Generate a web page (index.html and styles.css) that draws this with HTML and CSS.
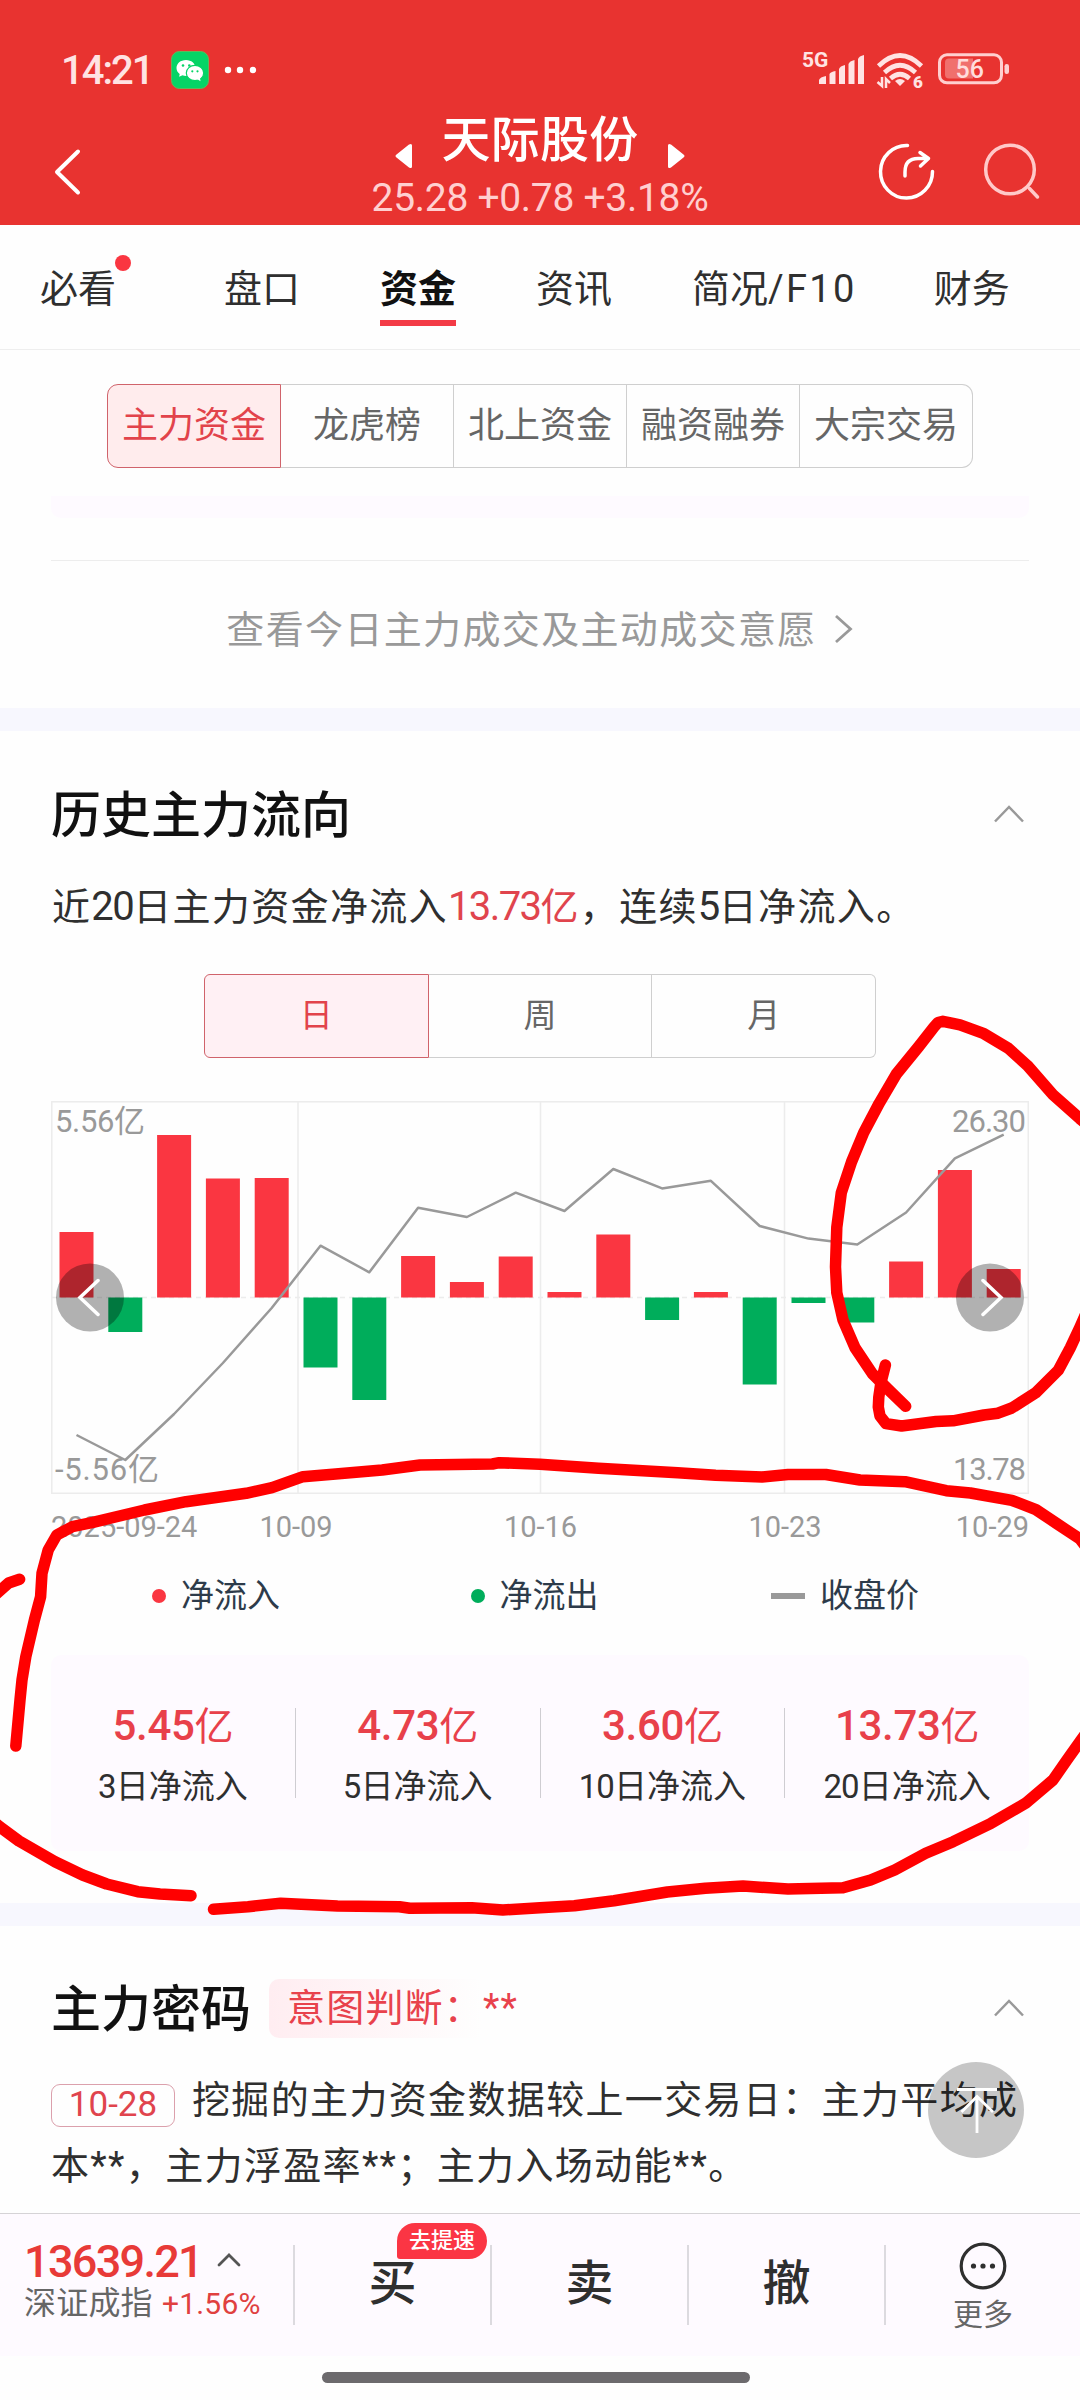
FILE: index.html
```html
<!DOCTYPE html>
<html lang="zh-CN">
<head>
  <meta charset="UTF-8" />
  <title>天际股份 - 资金</title>
  <link rel="stylesheet" href="styles.css">
</head>
<body>
  <div class="phone">
    <header class="header">
      <div class="status-bar">
        <span class="time">14:21</span>
        <svg class="wechat" width="38" height="38" viewBox="0 0 38 38">
          <rect x="0.5" y="0.5" width="37" height="37" rx="8" fill="#05d466" stroke="#5fb85a"/>
          <path d="M15 9c-5.500 0-9.500 3.600-9.500 8 0 2.500 1.300 4.500 3.200 6l-.6 2.800 3.400-1.500c1.100.4 2.300.6 3.500.6 5.300 0 9.500-3.500 9.500-7.900S20.300 9 15 9z" fill="#fff"/>
          <ellipse cx="24" cy="22" rx="8.700" ry="7.600" fill="#fff" stroke="#05d466" stroke-width="1.200"/>
          <path d="M26 28l3.500 2.200-.6-3.600z" fill="#fff"/>
          <g fill="#05d466"><circle cx="12" cy="14.500" r="1.300"/><circle cx="18.300" cy="14.500" r="1.300"/><circle cx="21.300" cy="20.300" r="1.100"/><circle cx="26.500" cy="20.300" r="1.100"/></g>
        </svg>
        <svg class="dots" width="34" height="8" viewBox="0 0 34 8" fill="#fff"><circle cx="4" cy="4" r="3.200"/><circle cx="16" cy="4" r="3.200"/><circle cx="29" cy="4" r="3.200"/></svg>
        <svg class="net" width="210" height="44" viewBox="800 48 210 44">
          <text x="802" y="66.500" class="net-5g">5G</text>
          <g fill="#ffe3e3">
            <path d="M819 84v-4q1-3 7-4v8z"/>
            <path d="M829.500 84v-10q1-2 6-3v13z"/>
            <path d="M839 84v-15q1-3 6-4v19z"/>
            <path d="M848.500 84v-20q1-3 6-4v24z"/>
            <path d="M858 84v-25q1-3 6-4v29z"/>
            <path d="M900 86l-5-5q5-4 10 0z"/>
          </g>
          <g fill="none" stroke="#ffe3e3" stroke-width="4.600">
            <path d="M878.500 66q21.500-21 43 0"/>
            <path d="M884.500 72.500q15.500-14.500 31 0"/>
            <path d="M890.500 78.500q9.500-8.500 19 0"/>
          </g>
          <path d="M877.500 82l4.500 4v-9M886 88v-9l4 4" fill="none" stroke="#ffe3e3" stroke-width="2.500"/>
          <text x="913" y="87.500" class="net-6">6</text>
          <rect x="939.500" y="54.800" width="62" height="28" rx="7.500" fill="none" stroke="#ffcfcf" stroke-width="3"/>
          <path d="M949 58.500h24v20h-24q-4 0-4-4v-12q0-4 4-4z" fill="#f0706d"/>
          <rect x="1004.500" y="64" width="4.500" height="10" rx="2.200" fill="#ffcfcf"/>
          <text x="955.500" y="78" class="net-batt">56</text>
        </svg>
      </div>
      <div class="title-bar">
        <svg class="back" width="30" height="50" viewBox="0 0 30 50"><path d="M26 4.500L5 25l21 20.500" fill="none" stroke="#fff" stroke-width="4" stroke-linecap="round" stroke-linejoin="round"/></svg>
        <div class="stock">
          <svg width="17" height="26" viewBox="0 0 17 26"><path d="M1.500 11.500L14 1.500q3-1.500 3 1v21q0 2.500-3 1L1.500 14.500q-2-1.500 0-3z" fill="#fff"/></svg>
          <div class="stock-text">
            <div class="stock-name">天际股份</div>
            <div class="stock-price">25.28 +0.78 +3.18%</div>
          </div>
          <svg width="17" height="26" viewBox="0 0 17 26"><path d="M15.500 11.500L3 1.500q-3-1.500-3 1v21q0 2.500 3 1l12.500-10q2-1.500 0-3z" fill="#fff"/></svg>
        </div>
        <div class="actions">
          <svg width="60" height="60" viewBox="876 142 60 60" fill="none" stroke="#fff" stroke-width="3.500" stroke-linecap="round" stroke-linejoin="round">
            <path d="M907.500 145.500A26 26.300 0 1 0 932.500 171.500"/>
            <path d="M905 176v-4q0-13.500 13-13.500h10M920 152.500l8.500 6-8 7.500"/>
          </svg>
          <svg width="60" height="60" viewBox="982 142 60 60" fill="none" stroke="#ffc9c9" stroke-width="3.500" stroke-linecap="round">
            <circle cx="1010" cy="169.500" r="24.300"/>
            <path d="M1029.500 188.500l8 8.500"/>
          </svg>
        </div>
      </div>
    </header>

    <nav class="tabs">
      <div class="tab has-dot">必看</div>
      <div class="tab">盘口</div>
      <div class="tab active">资金</div>
      <div class="tab">资讯</div>
      <div class="tab">简况<span class="slash">/F10</span></div>
      <div class="tab">财务</div>
    </nav>

    <main class="content">
      <section class="fund-section">
        <div class="segment fund-types">
          <div class="seg active">主力资金</div>
          <div class="seg">龙虎榜</div>
          <div class="seg">北上资金</div>
          <div class="seg">融资融券</div>
          <div class="seg">大宗交易</div>
        </div>
        <div class="strip"></div>
        <div class="more-link">
          <span>查看今日主力成交及主动成交意愿</span>
          <svg width="20" height="32" viewBox="0 0 20 32"><path d="M2 3l14.500 13L2 29" fill="none" stroke="#999" stroke-width="2.800"/></svg>
        </div>
      </section>

      <section class="history-section">
        <div class="section-head">
          <h2>历史主力流向</h2>
          <svg width="32" height="20" viewBox="0 0 32 20"><path d="M2 17.500L16 3l14 14.500" fill="none" stroke="#999" stroke-width="2.500"/></svg>
        </div>
        <p class="summary">近<span class="num">20</span>日主力资金净流入<span class="red"><span class="num">13.73</span>亿</span>，连续<span class="num">5</span>日净流入。</p>
        <div class="segment period">
          <div class="seg active">日</div>
          <div class="seg">周</div>
          <div class="seg">月</div>
        </div>

        <svg class="chart" id="chart" width="978" height="393" viewBox="51 1101 978 393">
          <g fill="none" stroke="#ececec" stroke-width="1.500">
            <rect x="51.800" y="1101.800" width="976.500" height="391.500"/>
            <path d="M298 1102v391M540.500 1102v391M784.500 1102v391"/>
            <path d="M52 1297.500h976" stroke-dasharray="5 4"/>
          </g>
          <g id="bars"></g>
          <polyline id="priceLine" fill="none" stroke="#999" stroke-width="2.500" stroke-linejoin="round"/>
          <g class="axis-text">
            <text x="55" y="1132" textLength="90">5.56亿</text>
            <text x="55" y="1480" textLength="104">-5.56亿</text>
            <text x="952" y="1132" textLength="74">26.30</text>
            <text x="953" y="1480" textLength="73">13.78</text>
          </g>
          <g fill="#000" fill-opacity="0.300"><circle cx="90" cy="1297.500" r="34"/><circle cx="990" cy="1297.500" r="34"/></g>
          <path d="M98 1280.500L80 1297.500l18 17M983 1280.500l18 17-18 17" fill="none" stroke="#fff" stroke-width="3.500" stroke-linecap="round"/>
        </svg>
        <div class="dates">
          <span>2025-09-24</span><span>10-09</span><span>10-16</span><span>10-23</span><span>10-29</span>
        </div>
        <div class="legend">
          <div class="legend-item"><i class="dot in"></i>净流入</div>
          <div class="legend-item middle"><i class="dot out"></i>净流出</div>
          <div class="legend-item"><i class="dash"></i>收盘价</div>
        </div>
        <div class="stats">
          <div class="stat"><b>5.45<em>亿</em></b><span><i>3</i>日净流入</span></div>
          <div class="stat"><b>4.73<em>亿</em></b><span><i>5</i>日净流入</span></div>
          <div class="stat"><b>3.60<em>亿</em></b><span><i>10</i>日净流入</span></div>
          <div class="stat"><b>13.73<em>亿</em></b><span><i>20</i>日净流入</span></div>
        </div>
      </section>

      <section class="code-section">
        <div class="section-head">
          <h2>主力密码</h2>
          <div class="intent">意图判断：<span>**</span></div>
          <svg width="32" height="20" viewBox="0 0 32 20"><path d="M2 17.500L16 3l14 14.500" fill="none" stroke="#999" stroke-width="2.500"/></svg>
        </div>
        <p class="code-text"><span class="date-tag">10-28</span>挖掘的主力资金数据较上一交易日：主力平均成<br>本<span class="star">**</span>，主力浮盈率<span class="star">**</span>；主力入场动能<span class="star">**</span>。</p>
      </section>
    </main>

    <footer class="bottom-bar">
      <div class="index">
        <div class="index-value">13639.21
          <svg width="26" height="16" viewBox="0 0 26 16"><path d="M3 13L13 3l10 10" fill="none" stroke="#555" stroke-width="2.800" stroke-linecap="round"/></svg>
        </div>
        <div class="index-name">深证成指 <span>+1.56%</span></div>
      </div>
      <div class="trade">买<span class="badge">去提速</span></div>
      <div class="trade">卖</div>
      <div class="trade">撤</div>
      <div class="more">
        <svg width="50" height="50" viewBox="0 0 50 50"><circle cx="25" cy="25" r="21.800" fill="none" stroke="#2f2f2f" stroke-width="3.200"/><g fill="#2f2f2f"><circle cx="15.500" cy="25" r="2.600"/><circle cx="25" cy="25" r="2.600"/><circle cx="34.500" cy="25" r="2.600"/></g></svg>
        <span>更多</span>
      </div>
    </footer>
    <div class="home-area"><div class="home-line"></div></div>

    <div class="to-top">
      <svg width="96" height="96" viewBox="0 0 96 96"><path d="M29 27.500h40M49 34v37M33.500 50L49 34.500 65 50" fill="none" stroke="#fff" stroke-width="2.800"/></svg>
    </div>

    <!-- hand drawn marks -->
    <svg class="marks" width="1080" height="2400" viewBox="0 0 1080 2400">
      <polyline points="905.700,1406.300 887.800,1389 872.300,1373.600 855,1347.800 843,1320 836.800,1292.700 835.500,1267 836.800,1227.300 841.300,1192.800 851.600,1161.800 863.700,1132.600 879.200,1103.300 896.400,1074 918.800,1046.500 934,1027 938,1022.500 942.900,1021.300 960,1024.800 984,1033.700 1008.300,1048.200 1027.300,1065.400 1053,1094.700 1080,1118.800 1092,1129"/>
      <polyline points="1092,1300 1080,1327 1070.300,1347.800 1058.300,1370.200 1035.900,1392.600 1011.800,1408 998,1413.200 984,1415 953,1420.800 936,1421.500 901.600,1426 886,1423.600 880,1416 878.300,1407 878.800,1397 881,1382.200 885.400,1365"/>
      <polyline points="15.800,1746 20,1700 22,1680 25.800,1656.700 34.400,1620 40.600,1596.700 42,1573.300 48.200,1550 56.800,1535 72.300,1526.700 93,1522.300 144.600,1510 186,1501.700 246.200,1493.300 272,1487.700 303,1476.700 335.700,1474 382.200,1470 420,1465 492.400,1464 499.300,1462.700 540,1464.300 598.500,1468.300 677.700,1472.800 715.600,1475.200 762,1477 788,1474.500 825.800,1474.500 860,1480 905,1481.700 946.300,1490.700 970.400,1493 1011.800,1500.300 1035.900,1509.600 1056.500,1523.400 1080,1539 1092,1555"/>
      <polyline points="-6,1596 8.600,1583 19.600,1579.300"/>
      <polyline points="-6,1822 0,1827 19,1841 55,1861.700 82.600,1875 106.700,1884 137.700,1891.700 160,1894 191,1895.700"/>
      <polyline points="213.500,1909.300 248,1906.700 280.600,1903.300 337.500,1906 399.400,1906.700 409.800,1908.300 471.800,1907.700 502.800,1910 540,1907.700 574.400,1905.700 614,1900.700 667.400,1892 705.300,1888.300 743,1886 788,1889 843,1887.700 870.600,1880 894.700,1870 925.700,1853.300 953.200,1841.700 991,1823.300 1025.500,1803.300 1053,1780 1066.900,1760 1080,1741.700 1092,1725"/>
    </svg>
  </div>

  <script>
    // bar length from the zero line (px), positive = inflow
    const flows = [65.5, -34.5, 162.5, 119, 119.5, -70, -102.5, 41.5, 15.5, 41, 5.5, 63, -22.5, 5.5, -87, -5.5, -25, 36, 127.5, 28.5];
    // y position of the closing price
    const prices = [1435, 1460, 1414, 1363, 1308, 1245.7, 1272.3, 1207.7, 1217, 1192.7, 1211, 1169, 1188.4, 1180.8, 1226, 1238.6, 1244.5, 1212.5, 1158.4, 1134.6];
    const zero = 1297.5;
    const step = 48.8;
    const firstX = 76.5;

    document.getElementById("bars").innerHTML = flows.map((v, i) => {
      const x = firstX + i * step - 17;
      const y = v > 0 ? zero - v : zero;
      const color = v > 0 ? '#fa3641' : '#00ad5b';
      return `<rect x="${x}" y="${y}" width="34" height="${Math.abs(v)}" fill="${color}"/>`;
    }).join('');

    document.getElementById("priceLine").setAttribute("points",
      prices.map((y, i) => `${firstX + i * step},${y}`).join(' '));
  </script>
</body>
</html>
```

FILE: styles.css
```css
* {
  box-sizing: border-box;
}
body {
  margin: 0;
  background-color: #fff;
  font-family: Roboto, "Noto Sans CJK SC", sans-serif;
  color: #2f2f2f;
}
h2, p {
  margin: 0;
}
i, em {
  font-style: normal;
}
svg {
  display: block;
  flex: none;
}
.phone {
  position: relative;
  width: 1080px;
  height: 2400px;
  display: flex;
  flex-direction: column;
  overflow: hidden;
  background-color: #fefefe;
}

/* Header */
.header {
  height: 225px;
  background-color: #e83330;
  color: #fff;
}
.status-bar {
  display: flex;
  align-items: center;
  height: 92px;
  padding: 48px 70px 0 61px;
}
.time {
  width: 110px;
  font-size: 40px;
  font-weight: 500;
  letter-spacing: -2px;
  color: #ffe3e3;
}
.dots {
  margin-left: 15px;
}
.net {
  margin-left: auto;
}
.net-5g {
  font-size: 21px;
  font-weight: 700;
  fill: #ffe3e3;
}
.net-6 {
  font-size: 17px;
  font-weight: 900;
  fill: #ffe3e3;
}
.net-batt {
  font-size: 25px;
  font-weight: 500;
  fill: #ffdcdc;
}
.title-bar {
  display: flex;
  height: 133px;
  padding-left: 52px;
  padding-right: 38px;
}
.back {
  margin-top: 55px;
}
.stock {
  display: flex;
  margin-left: 313px;
  padding-top: 12px;
}
.stock > svg {
  margin-top: 39px;
}
.stock-text {
  width: 340px;
  margin: 0 -42px;
  text-align: center;
}
.stock-name {
  font-size: 49px;
  line-height: 74px;
  letter-spacing: 0.3px;
  font-weight: 500;
}
.stock-price {
  font-size: 39px;
  line-height: 41px;
  letter-spacing: -0.3px;
  white-space: nowrap;
  color: #ffd0d0;
}
.actions {
  display: flex;
  gap: 46px;
  margin-left: auto;
  padding-top: 50px;
}

/* Tabs */
.tabs {
  display: flex;
  gap: 80px;
  height: 125px;
  padding: 34px 0 0 40px;
  border-bottom: 1.5px solid #eee;
}
.tab {
  position: relative;
  height: 67px;
  font-size: 38px;
  line-height: 60px;
  white-space: nowrap;
}
.tab.has-dot {
  margin-right: 28px;
}
.tab.has-dot::after {
  content: "";
  position: absolute;
  top: -4px;
  right: -15px;
  width: 16px;
  height: 16px;
  border-radius: 50%;
  background-color: #fa3641;
}
.tab.active {
  font-weight: 700;
  color: #111;
  border-bottom: 6px solid #f33b46;
}
.tab:last-child {
  margin-left: -3px;
}
.slash {
  letter-spacing: 2.3px;
}

/* Segmented buttons */
.segment {
  display: flex;
  height: 84px;
  margin: 0 auto;
}
.seg {
  flex: 1;
  border: 1.5px solid #cfcfcf;
  border-left-width: 0;
  text-align: center;
  color: #666;
}
.seg.active {
  color: #e2434b;
  border: 1.5px solid #d0636b;
  background-color: #ffeced;
}
.seg:first-child {
  border-radius: 11px 0 0 11px;
}
.seg:last-child {
  border-radius: 0 11px 11px 0;
}
.fund-types {
  width: 866px;
  font-size: 36px;
  line-height: 83px;
}
.period {
  width: 672px;
  margin-top: 27px;
  font-size: 33px;
  line-height: 81px;
}
.period .seg.active {
  background-color: #fff0f4;
}
.period .seg:first-child {
  border-radius: 6px 0 0 6px;
}
.period .seg:last-child {
  border-radius: 0 6px 6px 0;
}

/* Fund section */
.content {
  flex: 1;
  overflow: hidden;
}
.fund-section {
  height: 381px;
  padding: 34px 51px 0;
  border-bottom: 23px solid #f7f7fe;
}
.strip {
  height: 22px;
  margin-top: 28px;
  border-radius: 0 0 10px 10px;
  background-color: #fefaff;
}
.more-link {
  display: flex;
  align-items: center;
  justify-content: center;
  gap: 17px;
  height: 132px;
  margin-top: 42px;
  border-top: 1.5px solid #ededed;
  font-size: 38px;
  letter-spacing: 1.35px;
  color: #999;
}
.more-link svg {
  margin-top: 4px;
}

/* History */
.history-section {
  height: 1195px;
  padding: 43px 51px 0;
  border-bottom: 23px solid #f7f7fe;
}
.section-head {
  display: flex;
  align-items: center;
  height: 80px;
  padding-right: 4px;
}
.section-head h2 {
  font-size: 50px;
  font-weight: 500;
  line-height: 80px;
  padding-top: 3px;
  color: #111;
}
.section-head > svg {
  margin-left: auto;
}
.summary {
  margin-top: 19px;
  padding-left: 1px;
  font-size: 38px;
  line-height: 67px;
  letter-spacing: 1.35px;
  height: 67px;
  margin-bottom: 34px;
}
.num {
  font-size: 40px;
  letter-spacing: -1.6px;
}
.red {
  color: #e0444d;
}
.chart {
  margin-top: 43px;
}
.axis-text {
  font-size: 31px;
  fill: #999;
}
.dates {
  display: grid;
  grid-template-columns: 146px 198px 291px 198px 1fr;
  height: 66px;
  line-height: 67px;
  font-size: 29px;
  text-align: center;
  white-space: nowrap;
  color: #999;
}
.dates span:first-child {
  text-align: left;
}
.dates span:last-child {
  text-align: right;
}
.legend {
  display: flex;
  justify-content: space-between;
  height: 95px;
  padding: 12px 110px 0 101px;
  line-height: 48px;
  font-size: 33px;
  color: #2d3b4a;
}
.legend-item {
  display: flex;
  align-items: center;
  height: 48px;
}
.legend-item.middle {
  margin-left: 18px;
}
.dot {
  width: 14px;
  height: 14px;
  margin-right: 15px;
  border-radius: 50%;
}
.dot.in {
  background-color: #fa3641;
}
.dot.out {
  background-color: #00ad5b;
}
.dash {
  width: 34px;
  height: 6px;
  margin-right: 15px;
  background-color: #999;
}
.stats {
  display: flex;
  align-items: center;
  height: 196px;
  border-radius: 10px;
  background-color: #fefaff;
}
.stat {
  flex: 1;
  height: 90px;
  padding-top: 6px;
  display: flex;
  flex-direction: column;
  align-items: center;
  justify-content: center;
}
.stat + .stat {
  border-left: 1.5px solid #cfcdd2;
}
.stat b {
  font-size: 42px;
  line-height: 60px;
  font-weight: 500;
  letter-spacing: -0.3px;
  color: #e8404a;
}
.stat em {
  font-size: 39px;
  font-weight: 400;
}
.stat span {
  font-size: 33px;
  line-height: 60px;
}
.stat i {
  letter-spacing: -1px;
}

/* Code section */
.code-section {
  padding: 42px 51px 0;
}
.intent {
  height: 59px;
  width: 250px;
  margin-left: 18px;
  padding-left: 18px;
  border-radius: 10px;
  font-size: 38px;
  line-height: 58px;
  letter-spacing: 1.2px;
  white-space: nowrap;
  color: #e8424c;
  background-image: linear-gradient(to right, #ffedf1, #fefefe 85%);
}
.code-text {
  margin-top: 19px;
  font-size: 38px;
  line-height: 66px;
  letter-spacing: 1.35px;
  white-space: nowrap;
}
.date-tag {
  display: inline-block;
  width: 124px;
  height: 43px;
  margin-right: 17px;
  border: 1.5px solid #dba0ac;
  border-radius: 9px;
  font-size: 35px;
  line-height: 39px;
  letter-spacing: 0;
  text-align: center;
  vertical-align: -3px;
  color: #e0444d;
}

/* Bottom bar */
.bottom-bar {
  display: flex;
  height: 143px;
  padding-top: 31px;
  border-top: 1.5px solid #d5d3d6;
  background-color: #fefaff;
}
.bottom-bar > div {
  position: relative;
  height: 80px;
}
.bottom-bar > div + div {
  border-left: 2px solid #dcdadf;
}
.index {
  width: 293px;
  padding-left: 24px;
}
.index-value {
  display: flex;
  align-items: center;
  gap: 14px;
  font-size: 45px;
  line-height: 34px;
  font-weight: 500;
  letter-spacing: -1.7px;
  color: #e83a38;
}
.index-value svg {
  margin-top: -5px;
}
.index-name {
  font-size: 32px;
  line-height: 48px;
  letter-spacing: 0.2px;
  white-space: nowrap;
  color: #666;
}
.index-name span {
  margin-left: 1px;
  font-size: 30px;
  color: #e0403f;
}
.trade {
  width: 197px;
  text-align: center;
  font-size: 48px;
  line-height: 77px;
  font-weight: 500;
}
.badge {
  position: absolute;
  top: -22px;
  left: 102px;
  width: 90px;
  height: 36px;
  border-radius: 18px 18px 18px 3px;
  font-size: 22px;
  line-height: 35px;
  color: #fff;
  background-color: #fb3544;
}
.more {
  flex: 1;
  display: flex;
  flex-direction: column;
  align-items: center;
  font-size: 30px;
  line-height: 48px;
  color: #666;
}
.more svg {
  margin-top: -4px;
}
.home-area {
  height: 44px;
  padding-top: 16px;
}
.home-line {
  width: 428px;
  height: 11px;
  margin-left: 322px;
  border-radius: 6px;
  background-color: #6c6a6d;
}

/* Overlays */
.to-top {
  position: absolute;
  left: 928px;
  top: 2062px;
  width: 96px;
  height: 96px;
  border-radius: 50%;
  background-color: rgba(0, 0, 0, 0.22);
}
.marks {
  position: absolute;
  left: 0;
  top: 0;
  fill: none;
  stroke: #ff0000;
  stroke-width: 11.5;
  stroke-linecap: round;
  stroke-linejoin: round;
}
```
